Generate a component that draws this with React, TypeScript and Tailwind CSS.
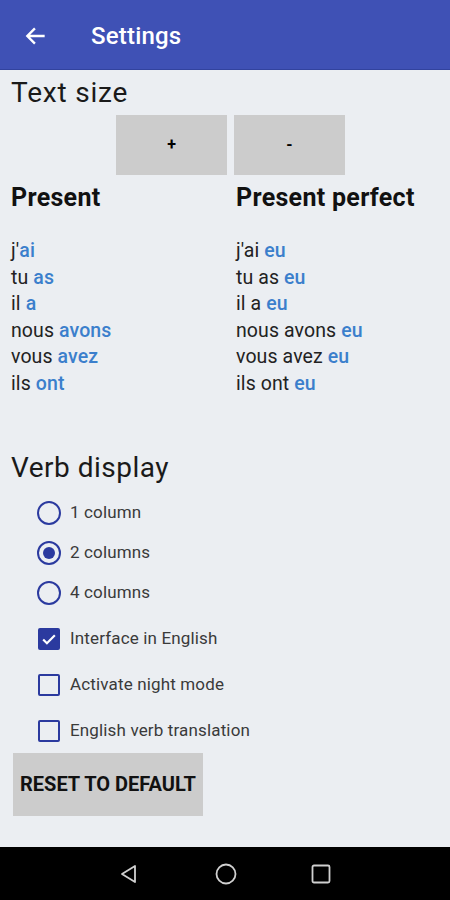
import React from "react";

const present = [
  ["j'", "ai"],
  ["tu ", "as"],
  ["il ", "a"],
  ["nous ", "avons"],
  ["vous ", "avez"],
  ["ils ", "ont"],
];

const perfect = [
  ["j'ai ", "eu"],
  ["tu as ", "eu"],
  ["il a ", "eu"],
  ["nous avons ", "eu"],
  ["vous avez ", "eu"],
  ["ils ont ", "eu"],
];

function Radio({ label, checked }: { label: string; checked?: boolean }) {
  return (
    <div className="flex h-[40px] items-center">
      <div className="ml-[37px] flex h-[24px] w-[24px] items-center justify-center rounded-full border-2 border-[#2b3a9f]">
        {checked && <div className="h-[12px] w-[12px] rounded-full bg-[#2b3a9f]" />}
      </div>
      <span className="ml-[9px] text-[17px] tracking-[0.15px] text-[#3a3a3a]">{label}</span>
    </div>
  );
}

function Check({ label, checked }: { label: string; checked?: boolean }) {
  return (
    <div className="flex h-[46px] items-center">
      <div
        className={
          checked
            ? "ml-[38px] flex h-[22px] w-[22px] items-center justify-center rounded-[2px] bg-[#2b3a9f]"
            : "ml-[38px] h-[22px] w-[22px] rounded-[2px] border-2 border-[#2b3a9f]"
        }
      >
        {checked && (
          <svg viewBox="0 0 24 24" className="h-[20px] w-[20px]" fill="none" stroke="white" strokeWidth="2.6">
            <path d="M5 12.5l4.5 4.5L19 7.5" />
          </svg>
        )}
      </div>
      <span className="ml-[10px] text-[17px] tracking-[0.15px] text-[#3a3a3a]">{label}</span>
    </div>
  );
}

export default function App() {
  return (
    <div className="flex h-[900px] w-[450px] flex-col bg-[#ebeef2] font-['Roboto',sans-serif]">
      <header className="flex h-[70px] shrink-0 items-center border-b border-[#32439e] bg-[#3f51b5] pt-[3px] text-white">
        <svg viewBox="0 0 24 24" className="ml-[23px] h-[26px] w-[26px]" fill="none" stroke="white" strokeWidth="2.2">
          <path d="M20 12H5M11 5l-7 7 7 7" />
        </svg>
        <span className="ml-[42px] text-[24px] font-medium tracking-[0.2px]">Settings</span>
      </header>

      <div className="flex-1">
        <div className="ml-[11px] mt-[6px] text-[28px] leading-[34px] tracking-[0.8px] text-[#1a1a1a]">Text size</div>
        <div className="mt-[5px] flex pl-[116px] gap-[7px]">
          <button className="h-[60px] w-[111px] bg-[#cccccc] text-[16px] font-bold text-black">+</button>
          <button className="h-[60px] w-[111px] bg-[#cccccc] text-[16px] font-bold text-black">-</button>
        </div>

        <div className="mt-[8px] flex">
          <div className="w-[225px] pl-[11px]">
            <div className="text-[25px] font-bold leading-[30px] tracking-[0.3px] text-[#111]">Present</div>
            <div className="mt-[25px]">
              {present.map(([a, b]) => (
                <div key={a + b} className="text-[19.5px] leading-[26.6px] tracking-[0.1px] text-[#222]">
                  {a}
                  <span className="font-medium text-[#3b7fcc]">{b}</span>
                </div>
              ))}
            </div>
          </div>
          <div className="pl-[11px]">
            <div className="text-[25px] font-bold leading-[30px] tracking-[0.3px] text-[#111]">Present perfect</div>
            <div className="mt-[25px]">
              {perfect.map(([a, b]) => (
                <div key={a} className="text-[19.5px] leading-[26.6px] tracking-[0.1px] text-[#222]">
                  {a}
                  <span className="font-medium text-[#3b7fcc]">{b}</span>
                </div>
              ))}
            </div>
          </div>
        </div>

        <div className="ml-[11px] mt-[53px] text-[28px] leading-[34px] tracking-[0.5px] text-[#1a1a1a]">Verb display</div>
        <div className="mt-[8px]">
          <Radio label="1 column" />
          <Radio label="2 columns" checked />
          <Radio label="4 columns" />
        </div>
        <div className="mt-[3px]">
          <Check label="Interface in English" checked />
          <Check label="Activate night mode" />
          <Check label="English verb translation" />
        </div>
        <button className="-mt-px ml-[13px] h-[63px] w-[190px] bg-[#cccccc] text-[20px] font-bold uppercase text-[#111]">
          Reset to default
        </button>
      </div>

      <nav className="flex h-[53px] shrink-0 items-center bg-black">
        <svg viewBox="0 0 24 24" className="ml-[117px] h-[24px] w-[24px]" fill="none" stroke="#d0d0d0" strokeWidth="1.8">
          <path d="M18 4v16L5 12z" strokeLinejoin="round" />
        </svg>
        <svg viewBox="0 0 24 24" className="ml-[73px] h-[24px] w-[24px]" fill="none" stroke="#d0d0d0" strokeWidth="1.8">
          <circle cx="12" cy="12" r="9.5" />
        </svg>
        <svg viewBox="0 0 24 24" className="ml-[71px] h-[24px] w-[24px]" fill="none" stroke="#d0d0d0" strokeWidth="1.8">
          <rect x="3.5" y="3.5" width="17" height="17" rx="1.5" />
        </svg>
      </nav>
    </div>
  );
}
